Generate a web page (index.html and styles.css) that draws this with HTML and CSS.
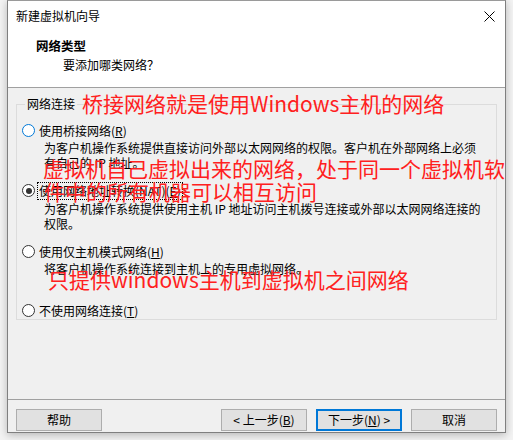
FILE: index.html
```html
<!DOCTYPE html>
<html lang="zh-CN">
<head>
<meta charset="utf-8">
<title>新建虚拟机向导</title>
<link rel="stylesheet" href="styles.css">
</head>
<body>
<div class="window">
  <div class="header">
    <div class="titlebar">
      <span class="title">新建虚拟机向导</span>
      <svg class="close" width="11" height="11" viewBox="0 0 11 11"><path d="M0.5 0.5L10.5 10.5M10.5 0.5L0.5 10.5" stroke="#000" stroke-width="1" fill="none"/></svg>
    </div>
    <div class="heading">网络类型</div>
    <div class="subheading">要添加哪类网络？</div>
  </div>
  <div class="body">
    <fieldset class="group">
      <legend class="legend">网络连接</legend>
      <div class="option opt1">
        <div class="label"><span class="radio hover"></span><span>使用桥接网络(<u>R</u>)</span></div>
        <div class="desc">为客户机操作系统提供直接访问外部以太网网络的权限。客户机在外部网络上必须<br>有自己的 IP 地址。</div>
      </div>
      <div class="option opt2">
        <div class="label"><span class="radio checked"></span><span class="focus">使用网络地址转换(NAT)(<u>E</u>)</span></div>
        <div class="desc">为客户机操作系统提供使用主机 IP 地址访问主机拨号连接或外部以太网网络连接的<br>权限。</div>
      </div>
      <div class="option opt3">
        <div class="label"><span class="radio"></span><span>使用仅主机模式网络(<u>H</u>)</span></div>
        <div class="desc">将客户机操作系统连接到主机上的专用虚拟网络。</div>
      </div>
      <div class="option opt4">
        <div class="label"><span class="radio"></span><span>不使用网络连接(<u>T</u>)</span></div>
      </div>
    </fieldset>
  </div>
  <div class="footer">
    <button class="btn">帮助</button>
    <span class="spacer"></span>
    <button class="btn">&lt; 上一步(<u>B</u>)</button>
    <button class="btn primary">下一步(<u>N</u>) &gt;</button>
    <button class="btn">取消</button>
  </div>
</div>
<div class="note n1">桥接网络就是使用Windows主机的网络</div>
<div class="note n2">虚拟机自己虚拟出来的网络，处于同一个虚拟机软</div>
<div class="note n3">件中的所有机器可以相互访问</div>
<div class="note n4">只提供windows主机到虚拟机之间网络</div>
</body>
</html>
```
FILE: styles.css
```css
html, body {
  margin: 0;
  padding: 0;
}
body {
  width: 513px;
  height: 440px;
  overflow: hidden;
  background: #f3f3f3;
  position: relative;
  font-family: "Noto Sans CJK SC", "Noto Sans", sans-serif;
  font-size: 12px;
  color: #000;
}
.window {
  margin-left: 7px;
  width: 497px;
  height: 431px;
  border: 1px solid #7f7f7f;
  border-top-color: #9a9a9a;
  background: #f0f0f0;
  box-shadow: 0 2px 8px rgba(0,0,0,0.25);
  display: flex;
  flex-direction: column;
}
.header {
  background: #fff;
  height: 86px;
  border-bottom: 1px solid #a0a0a0;
  box-sizing: content-box;
}
.titlebar {
  display: flex;
  align-items: center;
  justify-content: space-between;
  height: 16px;
  margin-top: 7px;
  padding-left: 8px;
  padding-right: 10px;
  line-height: 16px;
}
.close {
  display: block;
}
.heading {
  margin-top: 14px;
  padding-left: 28px;
  font-weight: bold;
  line-height: 16px;
  font-size: 12.5px;
}
.subheading {
  margin-top: 3px;
  padding-left: 55px;
  line-height: 16px;
}
.body {
  height: 303px;
  border-bottom: 1px solid #a0a0a0;
  padding: 8px 8px 0 8px;
}
.group {
  margin: 0;
  padding: 0 0 0 5px;
  border: 1px solid #dcdcdc;
  height: 224px;
  box-sizing: border-box;
  min-width: 0;
}
.legend {
  padding: 0 2px;
  margin-left: 3px;
  line-height: 16px;
}
.option .label {
  display: flex;
  align-items: center;
  height: 17px;
  line-height: 16px;
}
.radio {
  width: 11px;
  height: 11px;
  border: 1px solid #333;
  border-radius: 50%;
  background: #fff;
  margin-right: 4px;
  box-sizing: content-box;
  flex: none;
  position: relative;
}
.radio.hover {
  border-color: #0078d7;
}
.radio.checked::after {
  content: "";
  position: absolute;
  left: 2.5px;
  top: 2.5px;
  width: 6px;
  height: 6px;
  border-radius: 50%;
  background: #333;
}
.focus {
  outline: 1px dotted #000;
  outline-offset: 0;
  padding: 0 1px;
  margin-left: -1px;
}
.desc {
  padding-left: 22px;
  line-height: 15px;
  margin-top: 1px;
}
.opt1 { margin-top: 10px; }
.opt2 { margin-top: 12px; }
.opt2 .desc { margin-top: 2px; }
.opt3 { margin-top: 12px; }
.opt4 { margin-top: 26px; }
.footer {
  flex: 1;
  display: flex;
  align-items: flex-start;
  padding: 9px 8px 0 8px;
  gap: 9px;
}
.spacer {
  flex: 1;
}
.btn {
  width: 86px;
  height: 22px;
  border: 1px solid #adadad;
  background: #e1e1e1;
  font-family: inherit;
  font-size: 12px;
  color: #000;
  padding: 0;
  line-height: 18px;
}
.btn.primary {
  border: 2px solid #0078d7;
}
.note {
  position: absolute;
  color: #ff2020;
  font-size: 21px;
  line-height: 21px;
  white-space: nowrap;
  font-family: "Noto Sans CJK SC", sans-serif;
}
.n1 { left: 82px; top: 93px; }
.n2 { left: 43px; top: 158px; }
.n3 { left: 44px; top: 181px; }
.n4 { left: 48px; top: 269px; }
```
